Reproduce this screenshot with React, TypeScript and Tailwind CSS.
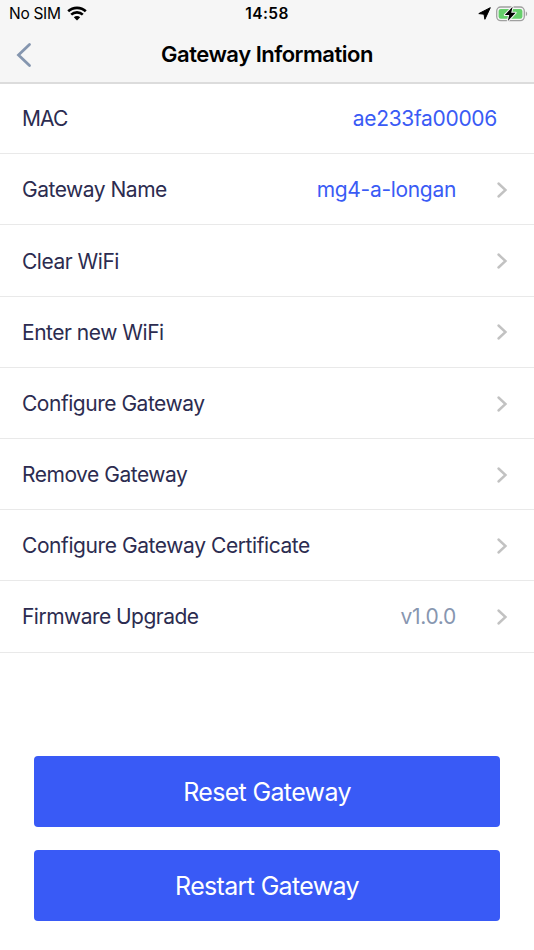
import { clsx } from 'clsx';

interface Row {
  label: string;
  labelClass?: string;
  value?: string;
  valueClass?: string;
  link?: boolean;
}

const rows: Row[] = [
  { label: 'MAC', labelClass: 'tracking-[-0.9px]', value: 'ae233fa00006', valueClass: 'text-[#3a5bf5] mr-[37px]' },
  { label: 'Gateway Name', value: 'mg4-a-longan', valueClass: 'text-[#3a5bf5]', link: true },
  { label: 'Clear WiFi', link: true },
  { label: 'Enter new WiFi', link: true },
  { label: 'Configure Gateway', link: true },
  { label: 'Remove Gateway', link: true },
  { label: 'Configure Gateway Certificate', labelClass: 'tracking-[-0.42px]', link: true },
  { label: 'Firmware Upgrade', labelClass: 'tracking-[-0.53px]', value: 'v1.0.0', valueClass: 'text-[#8796b0]', link: true },
];

function WifiIcon() {
  return (
    <svg width="20" height="15" viewBox="0 0 20 15" fill="none" stroke="#000" strokeWidth="2.6">
      <path d="M1.2 5.3C6 0.7 14 0.7 18.8 5.3" />
      <path d="M4.2 8.6C7.4 5.6 12.6 5.6 15.8 8.6" />
      <path d="M10 14.4L6.8 11.2C8.6 9.6 11.4 9.6 13.2 11.2Z" fill="#000" stroke="none" />
    </svg>
  );
}

function BatteryIcon() {
  return (
    <svg width="32" height="18" viewBox="0 0 32 18" fill="none">
      <rect x="0.7" y="2" width="27.6" height="13.6" rx="4" stroke="#a0a0a0" strokeWidth="1.3" />
      <rect x="2.6" y="3.9" width="23.8" height="9.8" rx="2.2" fill="#66cf6b" />
      <path d="M29.8 6.6C31.6 7.3 31.6 10.5 29.8 11.2Z" fill="#a0a0a0" />
      <path
        d="M16.6 1.8L8.8 10H13.2L11.8 16L19.6 7.8H15.2Z"
        fill="#000"
        stroke="#f6f6f6"
        strokeWidth="2"
        paintOrder="stroke"
        strokeLinejoin="round"
      />
    </svg>
  );
}

function StatusBar() {
  return (
    <div className="grid h-[27px] grid-cols-[1fr_60px_1fr] items-center text-[15.5px] text-black">
      <div className="flex items-center gap-[6px] pl-[9px]">
        <span className="pt-px tracking-[-0.3px]">No SIM</span>
        <WifiIcon />
      </div>
      <span className="pt-px text-center font-semibold tracking-[0.4px]">14:58</span>
      <div className="flex items-center justify-end gap-[5px] pr-[6px]">
        <svg width="13" height="13" viewBox="0 0 13 13">
          <path
            d="M12.3 0.7L0.8 6.6L6 7.2L6.9 12.3Z"
            fill="#000"
            stroke="#000"
            strokeWidth="1"
            strokeLinejoin="round"
          />
        </svg>
        <BatteryIcon />
      </div>
    </div>
  );
}

function Header() {
  return (
    <header className="h-[84px] border-b-2 border-[#dcdcdc] bg-[#f6f6f6]">
      <StatusBar />
      <div className="grid h-[55px] grid-cols-[60px_1fr_60px] items-center">
        <svg className="ml-4" width="16" height="26" viewBox="0 0 16 26" fill="none">
          <path d="M13.5 2.5L2.5 13L13.5 23.5" stroke="#8596af" strokeWidth="2.8" strokeLinecap="round" />
        </svg>
        <h1 className="text-center text-[22px] font-semibold tracking-[-0.5px] text-black">Gateway Information</h1>
      </div>
    </header>
  );
}

function ListRow({ label, labelClass = 'tracking-[-0.48px]', value, valueClass, link }: Row) {
  return (
    <li className="flex h-[71.2px] items-center border-b-[1.5px] border-[#e9e9e9] pt-[1.6px] pl-[22px] text-[21px]">
      <span className={clsx('text-[#2c2c50]', labelClass)}>{label}</span>
      <span className={clsx('ml-auto tracking-[-0.32px]', valueClass)}>{value}</span>
      {link && (
        <svg className="ml-[40px] mr-[26px]" width="12" height="18" viewBox="0 0 12 18" fill="none">
          <path d="M2.5 2.5L9.5 9L2.5 15.5" stroke="#c2c2c2" strokeWidth="2.4" strokeLinecap="round" />
        </svg>
      )}
    </li>
  );
}

function ActionButton({ text }: { text: string }) {
  return (
    <button className="h-[71px] rounded-[4px] bg-[#395af6] pt-[2px] text-[25px] tracking-[-0.66px] text-white">
      {text}
    </button>
  );
}

export default function App() {
  return (
    <div className="flex h-[950px] w-[534px] flex-col overflow-hidden bg-white font-['Inter',sans-serif]">
      <Header />
      <ul className="-mt-px">
        {rows.map((row) => (
          <ListRow key={row.label} {...row} />
        ))}
      </ul>
      <div className="mt-auto mb-[29px] flex flex-col gap-[23px] px-[34px]">
        <ActionButton text="Reset Gateway" />
        <ActionButton text="Restart Gateway" />
      </div>
    </div>
  );
}
